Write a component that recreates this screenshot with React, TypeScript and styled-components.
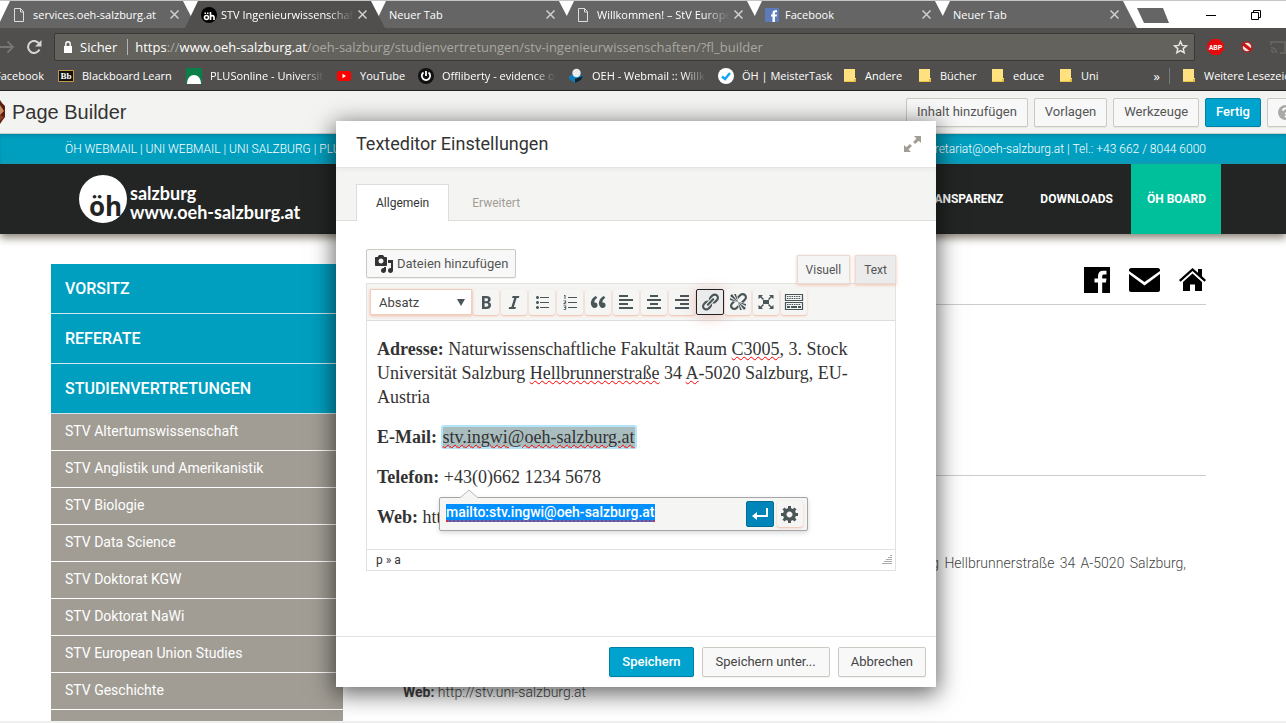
import React from "react";
import styled, { createGlobalStyle, css } from "styled-components";

const GlobalStyle = createGlobalStyle`
  *, *::before, *::after { box-sizing: border-box; }
  html, body, #root { height: 100%; }
  body { margin: 0; background: #fff; font-family: Roboto, "Liberation Sans", sans-serif; overflow: hidden; }
  button, input, select { font-family: inherit; margin: 0; }
  a { color: inherit; text-decoration: none; }
  svg { display: block; flex: none; }
`;

/* ---------- Browser frame ---------- */

const Window = styled.div`
  position: relative;
  display: flex;
  flex-direction: column;
  height: 100vh;
  overflow: hidden;
`;

const Chrome = styled.header`
  flex: none;
  color: #fff;
  font: 11px/16px "Segoe UI", "Open Sans", sans-serif;
`;

const TabStrip = styled.div`
  display: flex;
  height: 28px;
  padding-left: 9px;
  background: #fff;
  border-top: 1px solid #c4c6c4;
`;

const BrowserTab = styled.div<{ $active?: boolean }>`
  position: relative;
  z-index: ${(p) => (p.$active ? 1 : 0)};
  display: flex;
  align-items: center;
  gap: 4px;
  width: 200px;
  flex: none;
  margin-left: -12px;
  padding: 0 18px 0 16px;
  background: ${(p) => (p.$active ? "#504f4d" : "#656565")};
  clip-path: polygon(0 100%, 13px 0, 186px 0, 200px 100%);
`;

const TabTitle = styled.span<{ $fade?: boolean }>`
  flex: 1;
  min-width: 0;
  overflow: hidden;
  white-space: nowrap;
  ${(p) => p.$fade && css`mask-image: linear-gradient(90deg, #000 80%, transparent);`}
`;

const IconSlot = styled.span`
  display: flex;
  width: 16px;
  flex: none;
`;

const BareButton = styled.button`
  display: flex;
  align-items: center;
  justify-content: center;
  flex: none;
  padding: 0;
  border: 0;
  background: none;
  color: inherit;
`;

const NewTab = styled.button`
  width: 32px;
  height: 15px;
  margin: 7px 0 0;
  padding: 0;
  border: 0;
  background: #656565;
  clip-path: polygon(0 0, 26px 0, 32px 100%, 7px 100%);
`;

const WindowButtons = styled.div`
  display: flex;
  gap: 35px;
  margin-left: auto;
  padding-right: 25px;
  color: #000;
`;

const AddressRow = styled.div`
  display: flex;
  align-items: center;
  height: 33px;
  padding-top: 5px;
  gap: 12px;
  background: #504f4d;
`;

const AddressBox = styled.div`
  display: flex;
  align-items: center;
  flex: 1;
  height: 28px;
  padding: 0 6px 0 9px;
  background: #63625c;
  border: 1px solid #3a3937;
  border-radius: 2px;
  font-size: 13px;
`;

const Secure = styled.span`
  padding: 0 10px 0 8px;
  margin-right: 7px;
  border-right: 1px solid #b5b4b0;
`;

const Url = styled.span`
  flex: 1;
  color: #fff;
  white-space: nowrap;
`;

const Dim = styled.span`
  color: #a9a8a3;
`;

const Extensions = styled.div`
  display: flex;
  align-items: center;
  gap: 16px;
  width: 79px;
  flex: none;
`;

const Bookmarks = styled.nav`
  display: flex;
  align-items: center;
  height: 30px;
  margin-left: -5px;
  background: #504f4d;
  border-bottom: 1px solid #262524;
`;

const Bookmark = styled.a<{ $width: number; $fade?: boolean }>`
  display: flex;
  align-items: center;
  gap: 8px;
  flex: none;
  width: ${(p) => p.$width}px;
  white-space: nowrap;
  span:last-child {
    flex: 1;
    overflow: hidden;
    margin-right: ${(p) => (p.$fade ? 12 : 0)}px;
    ${(p) => p.$fade && css`mask-image: linear-gradient(90deg, #000 80%, transparent);`}
  }
`;

const Overflow = styled(BareButton)`
  margin-left: auto;
  height: 16px;
  padding-right: 9px;
  margin-right: 12px;
  border-right: 1px solid #777;
  font-size: 13px;
`;

/* ---------- Builder bar and site header ---------- */

const BuilderBar = styled.div`
  display: flex;
  align-items: center;
  flex: none;
  height: 43px;
  background: #f3f3f2;
  border-bottom: 1px solid #ccc;
`;

const BuilderTitle = styled.h1`
  margin: 0 auto 0 7px;
  color: #333;
  font: 20px/24px "Liberation Sans", Arial, sans-serif;
`;

const ButtonRow = styled.div<{ $gap: number; $bleed?: boolean }>`
  display: flex;
  gap: ${(p) => p.$gap}px;
  margin-right: ${(p) => (p.$bleed ? -18 : 0)}px;
`;

const Button = styled.button<{ $primary?: boolean; $pad?: number }>`
  display: flex;
  align-items: center;
  gap: 3px;
  height: 29px;
  padding: 0 ${(p) => p.$pad ?? 10}px;
  border: 1px solid ${(p) => (p.$primary ? "#0081a3" : "#ccc9c2")};
  border-radius: 2px;
  background: ${(p) => (p.$primary ? "#00a3cd" : "#f8f8f8")};
  color: ${(p) => (p.$primary ? "#fff" : "#555")};
  font-size: 13px;
  font-weight: ${(p) => (p.$primary ? 500 : 400)};
  line-height: 16px;
  white-space: nowrap;
  box-shadow: 0 1px 0 rgba(0, 0, 0, 0.05);
`;

const TopBar = styled.div`
  display: flex;
  justify-content: space-between;
  align-items: center;
  flex: none;
  height: 30px;
  padding: 0 80px 0 65px;
  background: #009fbf;
  box-shadow: inset 0 2px 3px rgba(0, 0, 0, 0.12);
  color: #fff;
  font-size: 12px;
  font-weight: 300;
  line-height: 16px;
`;

const SiteHeader = styled.div`
  position: relative;
  display: flex;
  justify-content: space-between;
  flex: none;
  height: 70px;
  padding: 0 65px 0 79px;
  background: #232524;
  box-shadow: 0 4px 8px #8d867a;
`;

const Logo = styled.a`
  display: flex;
  align-items: center;
  gap: 3px;
  color: #fff;
  font: 700 18px/19px Lato, "Open Sans", sans-serif;
`;

const LogoMark = styled.span`
  display: flex;
  justify-content: center;
  align-items: flex-end;
  width: 48px;
  height: 48px;
  border-radius: 50%;
  background: #fff;
  color: #232524;
  padding: 0 0 3px 5px;
  font: 700 26px/28px "Open Sans", sans-serif;
`;

const LogoText = styled.span`
  padding-top: 7px;
`;

const MainNav = styled.nav`
  display: flex;
  color: #fff;
  font-size: 12px;
  font-weight: 700;
`;

const NavLink = styled.a<{ $highlight?: boolean }>`
  display: flex;
  align-items: center;
  padding: ${(p) => (p.$highlight ? "0 15px 0 16px" : "0 18px 0 19px")};
  background: ${(p) => (p.$highlight ? "#00c09c" : "transparent")};
`;

/* ---------- Page content ---------- */

const Page = styled.main`
  display: flex;
  flex: 1;
  min-height: 0;
  gap: 40px;
  padding: 30px 80px 0 51px;
  overflow: hidden;
  border-bottom: 2px solid #f0f0f0;
`;

const Sidebar = styled.nav`
  width: 292px;
  flex: none;
  color: #fff;
`;

const SideHeading = styled.a`
  display: flex;
  align-items: center;
  height: 50px;
  padding-left: 14px;
  background: #009fbf;
  border-bottom: 1px solid #cfe6ec;
  font-size: 16px;
  font-weight: 500;
`;

const SideItem = styled.a`
  display: block;
  height: 37px;
  padding: 8px 14px;
  background: #a19d95;
  border-bottom: 1px solid #fff;
  font-size: 14px;
  line-height: 18px;
`;

const Article = styled.section`
  flex: 1;
  min-width: 0;
`;

const SocialRow = styled.div`
  display: flex;
  justify-content: flex-end;
  align-items: center;
  gap: 19px;
  height: 41px;
  padding-bottom: 9px;
  border-bottom: 1px solid #ccc;
`;

const PageTitle = styled.div`
  height: 171px;
  border-bottom: 1px solid #ccc;
`;

const Contact = styled.div`
  padding: 75px 20px 0;
  color: #444;
  font-size: 14px;
  font-weight: 300;
  line-height: 24px;
  text-align: justify;
  p { margin: 0 0 11px; }
  b { font-weight: 700; }
`;

/* ---------- Settings dialog ---------- */

const Overlay = styled.div`
  position: absolute;
  z-index: 5;
  inset: 121px 14px 0 0;
  display: flex;
  justify-content: center;
  align-items: flex-start;
  pointer-events: none;
`;

const Dialog = styled.section`
  width: 600px;
  background: #fff;
  box-shadow: 0 5px 22px 2px rgba(0, 0, 0, 0.6);
  pointer-events: auto;
`;

const DialogHeader = styled.div`
  display: flex;
  justify-content: space-between;
  align-items: center;
  height: 47px;
  padding: 0 15px 0 20px;
  border-bottom: 1px solid #e3e3e1;
  h2 { margin: 0; color: #333; font-size: 18px; line-height: 24px; font-weight: 400; }
`;

const DialogTabs = styled.div`
  display: flex;
  align-items: flex-end;
  gap: 3px;
  height: 53px;
  padding-left: 20px;
  background: #f4f4f2;
  border-bottom: 1px solid #ddd;
  box-shadow: inset 0 3px 3px rgba(0, 0, 0, 0.03);
`;

const DialogTab = styled.button<{ $active?: boolean }>`
  height: 37px;
  margin-bottom: -1px;
  padding: 0 19px;
  border: 1px solid ${(p) => (p.$active ? "#ddd" : "transparent")};
  border-bottom: 0;
  background: ${(p) => (p.$active ? "#fff" : "transparent")};
  color: ${(p) => (p.$active ? "#333" : "#a19d95")};
  font-size: 12px;
`;

const DialogBody = styled.div`
  padding: 28px 40px 65px 30px;
`;

const EditorTools = styled.div`
  display: flex;
  justify-content: space-between;
  align-items: flex-start;
  height: 34px;
`;

const ModeTabs = styled.div`
  position: relative;
  z-index: 1;
  display: flex;
  gap: 5px;
  padding-top: 6px;
`;

const glow = css`
  box-shadow: 0 1px 3px rgba(240, 150, 110, 0.6);
`;

const ModeTab = styled.button<{ $dark?: boolean }>`
  height: 29px;
  padding: 0 8px;
  border: 1px solid #e5ddd8;
  background: ${(p) => (p.$dark ? "#ebebeb" : "#f5f5f5")};
  color: #555;
  font-size: 12px;
  ${glow}
`;

const Editor = styled.div`
  border: 1px solid #e2e2df;
`;

const EditorToolbar = styled.div`
  display: flex;
  align-items: center;
  gap: 2px;
  height: 37px;
  padding-left: 3px;
  background: #f5f5f4;
  border-bottom: 1px solid #ddd;
`;

const SelectWrap = styled.label`
  position: relative;
  display: flex;
  width: 102px;
  margin-right: -1px;
  svg { position: absolute; right: 7px; top: 10px; pointer-events: none; }
`;

const FormatSelect = styled.select`
  appearance: none;
  width: 100%;
  height: 26px;
  padding: 0 8px;
  border: 1px solid #f0cfc0;
  border-radius: 0;
  background: #fff;
  color: #444;
  font-size: 13px;
  ${glow}
`;

const ToolButton = styled.button<{ $pressed?: boolean; $primary?: boolean }>`
  display: flex;
  align-items: center;
  justify-content: center;
  width: 26px;
  height: 26px;
  padding: 0;
  flex: none;
  border: 0;
  border-radius: 3px;
  background: #f5f5f4;
  color: #4a5558;
  box-shadow: 0 1px 2px rgba(240, 150, 110, 0.6);
  ${(p) =>
    p.$pressed &&
    css`
      width: 28px;
      margin: 0 -1px;
      border: 1px solid #222;
      border-radius: 2px;
      background: #ebebeb;
      box-shadow: 0 2px 14px rgba(200, 80, 60, 0.3);
    `}
  ${(p) =>
    p.$primary &&
    css`
      width: 28px;
      border: 1px solid #006f95;
      border-radius: 2px;
      background: #0085ba;
      color: #fff;
      box-shadow: none;
    `}
`;

const EditorContent = styled.div`
  position: relative;
  height: 228px;
  padding: 16px 10px 0;
  color: #333;
  font: 18px/24px Georgia, "Liberation Serif", serif;
  white-space: nowrap;
  p { margin: 0 0 16px; }
`;

const Misspelt = styled.span`
  text-decoration: underline wavy #f00 1px;
`;

const SelectedLink = styled.a`
  margin-left: 1px;
  background: #a9bdbf;
  border-radius: 1px;
  box-shadow: 0 0 0 2px #b3e4fa;
  text-decoration: underline wavy #f00 1px;
`;

const LinkPopover = styled.form`
  position: absolute;
  left: 72px;
  top: 176px;
  display: flex;
  align-items: center;
  gap: 3px;
  width: 369px;
  height: 34px;
  padding: 0 4px 0 6px;
  background: #f5f5f4;
  border: 1px solid #a3a5a6;
  border-radius: 2px;
  box-shadow: 0 2px 5px rgba(0, 0, 0, 0.15);
  > svg { position: absolute; left: 20px; top: -9px; }
`;

const UrlInput = styled.input`
  width: 209px;
  height: 18px;
  margin: 0 auto 2px 0;
  padding: 0;
  border: 0;
  border-bottom: 2px dotted #d22a4a;
  background: #0090ff;
  color: #fff;
  font-family: Roboto, sans-serif;
  font-size: 14px;
  font-weight: 500;
  outline: 0;
`;

const StatusBar = styled.div`
  display: flex;
  justify-content: space-between;
  align-items: center;
  height: 21px;
  padding: 0 2px 0 9px;
  border-top: 1px solid #e2e2df;
  color: #333;
  font-size: 12px;
`;

const DialogFooter = styled.div`
  display: flex;
  justify-content: flex-end;
  padding: 10px;
  border-top: 1px solid #e3e3e1;
  button { height: 30px; color: #444; }
  button:first-child { color: #fff; }
`;

/* ---------- Icons ---------- */

const DocIcon = () => (
  <svg width="12" height="14" viewBox="0 0 12 14" fill="none" stroke="#ddd">
    <path d="M1.5.5h6l3 3v10h-9zM7.5.5v3.5h3" />
  </svg>
);

const OehIcon = () => (
  <svg width="16" height="16" viewBox="0 0 16 16">
    <circle cx="8" cy="8" r="8" fill="#000" />
    <g fill="none" stroke="#fff" strokeWidth="1.6">
      <circle cx="5.5" cy="10.5" r="2" />
      <path d="M9.5 5v8M9.5 10.5c0-2.500 3.500-2.500 3.500 0V13" />
    </g>
    <path d="M3.500 5.500h1.500V7H3.500zM6 5.500h1.500V7H6z" fill="#fff" />
  </svg>
);

const FbIcon = () => (
  <svg width="14" height="14" viewBox="0 0 14 14">
    <path d="M0 0h14v14H0z" fill="#5b7cb8" />
    <path d="M7.5 14V8.5H6v-2h1.5V5c0-1.9 1-2.8 2.7-2.8H12v2h-1.200c-.7 0-.9.3-.9.9v1.4H12l-.3 2H9.900V14z" fill="#fff" />
  </svg>
);

const CloseIcon = () => (
  <svg width="9" height="9" viewBox="0 0 9 9" stroke="#cfcfcf" strokeWidth="1.5">
    <path d="M.5.5l8 8M8.500.5l-8 8" />
  </svg>
);

const FolderIcon = () => (
  <svg width="14" height="14" viewBox="0 0 14 14">
    <path d="M1 0h11v9h1v4H1z" fill="#ffe27f" />
    <path d="M1 13h12v-3h-2v2.300H1z" fill="#e9b935" />
  </svg>
);

const dash = {
  bold: "M6 4v13h4.54c1.37 0 2.46-.33 3.26-1 .8-.66 1.2-1.58 1.2-2.77 0-.84-.17-1.51-.51-2.01s-.9-.85-1.67-1.03v-.09c.57-.1 1.02-.4 1.36-.9s.51-1.13.51-1.91c0-1.14-.39-1.98-1.17-2.5C12.75 4.26 11.5 4 9.78 4H6zm2.57 5.15V6.26h1.36c.73 0 1.27.11 1.61.32.34.22.51.58.51 1.07 0 .54-.16.92-.47 1.15s-.82.35-1.51.35h-1.5zm0 2.19h1.6c1.44 0 2.16.53 2.16 1.61 0 .6-.17 1.05-.51 1.34s-.86.43-1.57.43H8.57v-3.38z",
  italic: "M14.78 6h-2.13l-2.8 9h2.12l-.62 2H4.6l.62-2h2.14l2.8-9H8.03l.62-2h6.75z",
  ul: "M5.5 7C4.67 7 4 6.33 4 5.5 4 4.68 4.67 4 5.5 4 6.32 4 7 4.68 7 5.5 7 6.33 6.32 7 5.5 7zM8 5h9v1H8V5zm-2.5 7c-.83 0-1.5-.67-1.5-1.5C4 9.68 4.67 9 5.5 9c.82 0 1.5.68 1.5 1.5 0 .83-.68 1.5-1.5 1.5zM8 10h9v1H8v-1zm-2.5 7c-.83 0-1.5-.67-1.5-1.5 0-.82.67-1.5 1.5-1.5.82 0 1.5.68 1.5 1.5 0 .83-.68 1.5-1.5 1.5zM8 15h9v1H8v-1z",
  ol: "M8 5h9v1H8zM8 10h9v1H8zM8 15h9v1H8zM4 3h1.500v4h-1V4H4zM3.500 8.500h2.700v2L4.700 11.500h1.500v.8H3.500v-1.100l1.700-1.200v-.7H3.500zM3.500 13.500h2.700v4.300H3.500V17h1.700v-1H4v-.7h1.200v-1H3.500z",
  quote: "M9.49 13.22c0-.74-.2-1.38-.61-1.9-.62-.78-1.83-.88-2.53-.72-.29-1.65 1.11-3.75 2.92-4.65L7.88 4c-2.73 1.3-5.42 4.28-4.96 8.05C3.21 14.43 4.59 16 6.54 16c.85 0 1.56-.25 2.12-.75s.83-1.18.83-2.03zm8.05 0c0-.74-.2-1.38-.61-1.9-.63-.78-1.83-.88-2.53-.72-.29-1.65 1.11-3.75 2.92-4.65L15.93 4c-2.73 1.3-5.41 4.28-4.95 8.05.29 2.38 1.66 3.95 3.61 3.95.85 0 1.56-.25 2.12-.75s.83-1.18.83-2.03z",
  left: "M12 5V3H3v2h9zm5 4V7H3v2h14zm-5 4v-2H3v2h9zm5 4v-2H3v2h14z",
  center: "M14 5V3H6v2h8zm3 4V7H3v2h14zm-3 4v-2H6v2h8zm3 4v-2H3v2h14z",
  right: "M17 5V3H8v2h9zm0 4V7H3v2h14zm0 4v-2H8v2h9zm0 4v-2H3v2h14z",
  link: "M17.74 2.76c1.68 1.69 1.68 4.41 0 6.1l-1.53 1.52c-1.12 1.12-2.7 1.47-4.14 1.09l2.62-2.61.76-.77.76-.76c.84-.84.84-2.2 0-3.04-.84-.85-2.2-.85-3.04 0l-.77.76-3.38 3.38c-.37-1.44-.02-3.02 1.1-4.14l1.52-1.53c1.69-1.68 4.42-1.68 6.1 0zM8.59 13.43l5.34-5.34c.42-.42.42-1.1 0-1.52-.44-.43-1.13-.39-1.53 0l-5.33 5.34c-.42.42-.42 1.1 0 1.52.44.43 1.13.39 1.52 0zm-.76 2.29l4.14-4.15c.38 1.44.03 3.02-1.09 4.14l-1.52 1.53c-1.69 1.68-4.41 1.68-6.1 0-1.68-1.68-1.68-4.42 0-6.1l1.53-1.52c1.12-1.12 2.7-1.47 4.14-1.1l-4.14 4.15c-.85.84-.85 2.2 0 3.05.84.84 2.2.84 3.04 0z",
  unlink: "M17.74 2.26c1.68 1.69 1.68 4.41 0 6.1l-1.53 1.52c-.32.33-.69.58-1.08.77L13 10l1.69-1.64.76-.77.76-.76c.84-.84.84-2.2 0-3.04-.84-.85-2.2-.85-3.04 0l-.77.76-.76.76L10 7l-.65-2.14c.19-.38.44-.75.77-1.07l1.52-1.53c1.69-1.68 4.42-1.68 6.1 0zM2 4l8 6-6-8zm4-2l4 8-2-8H6zM2 6l8 4-8-2V6zm7.36 7.69L10 13l.74 2.35-1.38 1.39c-1.69 1.68-4.41 1.68-6.1 0-1.68-1.68-1.68-4.42 0-6.1l1.39-1.38L7 10l-.69.64-1.52 1.53c-.85.84-.85 2.2 0 3.04.84.85 2.2.85 3.04 0zM18 16l-8-6 6 8zm-4 2l-4-8 2 8h2zm4-4l-8-4 8 2v2z",
  full: "M7 8h6v4H7zM2.500 3h4.500L5.500 4.500 8 7 7 8 4.500 5.500 2.500 7zM17.500 3v4l-2-1.500L13 8l-1-1 2.500-2.500L13 3zM2.500 17v-4l2 1.500L7 12l1 1-2.500 2.500L7 17zM17.500 17H13l1.500-1.500L12 13l1-1 2.500 2.500 2-1.500z",
  gear: "M18 12h-2.18c-.17.7-.44 1.35-.81 1.93l1.54 1.54-2.1 2.1-1.54-1.54c-.58.36-1.23.63-1.91.79V19H8v-2.18c-.68-.16-1.33-.43-1.91-.79l-1.54 1.54-2.12-2.12 1.54-1.54c-.36-.58-.63-1.23-.79-1.91H1V9.03h2.17c.16-.7.44-1.35.8-1.94L2.43 5.55l2.1-2.1 1.54 1.54c.58-.37 1.24-.64 1.93-.81V2h3v2.18c.68.16 1.33.43 1.91.79l1.54-1.54 2.12 2.12-1.54 1.54c.36.59.64 1.24.8 1.94H18V12zm-8.5 1.5c1.66 0 3-1.34 3-3s-1.34-3-3-3-3 1.34-3 3 1.34 3 3 3z",
  enter: "M16 4h2v9H7v3l-5-4 5-4v3h9V4z",
  media: "M13 11V4c0-.55-.45-1-1-1h-1.67L9 1H5L3.67 3H2c-.55 0-1 .45-1 1v7c0 .55.45 1 1 1h10c.55 0 1-.45 1-1zM7 4.5c1.38 0 2.5 1.12 2.5 2.5S8.38 9.5 7 9.5 4.5 8.38 4.5 7 5.62 4.5 7 4.5zM14 6h5v10.5c0 1.38-1.12 2.5-2.5 2.5S14 17.88 14 16.5s1.12-2.5 2.5-2.5c.17 0 .34.02.5.05V9h-3V6zm-4 8.05V13h2v3.5c0 1.38-1.12 2.5-2.5 2.5S7 17.88 7 16.5 8.12 14 9.5 14c.17 0 .34.02.5.05z",
};

const Dash = ({ d, color = "currentColor" }: { d: string; color?: string }) => (
  <svg width="20" height="20" viewBox="0 0 20 20" fill={color}>
    <path d={d} />
  </svg>
);

const KeyboardIcon = () => (
  <svg width="20" height="20" viewBox="0 0 20 20" fill="none" stroke="currentColor">
    <path d="M1.500 2.500h17v6h-17zM1.500 10.500h17v7h-17z" strokeWidth="1.2" />
    <path d="M3 4.500h14M3 6.500h14M3 12.500h14" strokeWidth="1.2" strokeDasharray="1.5 .8" />
    <path d="M3 15h3M7 15h6M14 15h3" strokeWidth="2" />
  </svg>
);

/* ---------- Data ---------- */

const tabs = [
  { title: "services.oeh-salzburg.at", icon: <DocIcon /> },
  { title: "STV Ingenieurwissenschaften", icon: <OehIcon />, active: true, fade: true },
  { title: "Neuer Tab" },
  { title: "Willkommen! – StV European", icon: <DocIcon />, fade: true },
  { title: "Facebook", icon: <FbIcon /> },
  { title: "Neuer Tab" },
];

const bookmarks = [
  {
    label: "Blackboard Learn",
    width: 128,
    icon: (
      <svg width="16" height="12" viewBox="0 0 16 12">
        <path d="M.5.5h15v11H.5z" fill="#111" stroke="#c79a4b" />
        <text x="8" y="9" fill="#fff" fontFamily="Liberation Serif" fontWeight="700" fontSize="9" textAnchor="middle">Bb</text>
      </svg>
    ),
  },
  {
    label: "PLUSonline - Universität",
    width: 150,
    fade: true,
    icon: (
      <svg width="16" height="16" viewBox="0 0 16 16">
        <path d="M0 0h16v16H0z" fill="#0a7f47" />
        <path d="M1 16c0-12 14-12 14 0z" fill="#fff" />
      </svg>
    ),
  },
  {
    label: "YouTube",
    width: 82,
    icon: (
      <svg width="16" height="12" viewBox="0 0 16 12">
        <rect x="1" y="1" width="14" height="10" rx="2" fill="#f00" />
        <path d="M6.500 3.800v4.400L10 6z" fill="#fff" />
      </svg>
    ),
  },
  {
    label: "Offliberty - evidence of",
    width: 150,
    fade: true,
    icon: (
      <svg width="16" height="16" viewBox="0 0 16 16" fill="none" stroke="#fff">
        <circle cx="8" cy="8" r="8" fill="#111" stroke="none" />
        <path d="M5.500 4.500a4.200 4.200 0 1 0 5 0M8 3v5" strokeWidth="1.8" />
      </svg>
    ),
  },
  {
    label: "OEH - Webmail :: Willkommen",
    width: 150,
    fade: true,
    icon: (
      <svg width="16" height="16" viewBox="0 0 16 16">
        <path d="M1 8l7-3 7 3-2 4-6 3-6-4z" fill="#0e7bb5" />
        <path d="M7 15l6-3 2-4-8 3z" fill="#12222c" />
        <circle cx="8.500" cy="5" r="4.200" fill="#e9ecee" />
      </svg>
    ),
  },
  {
    label: "ÖH | MeisterTask",
    width: 125,
    icon: (
      <svg width="16" height="16" viewBox="0 0 16 16">
        <circle cx="8" cy="8" r="8" fill="#fff" />
        <path d="M4 8.500l3 2.500 5-6" fill="none" stroke="#14a5f4" strokeWidth="2.4" />
      </svg>
    ),
  },
  { label: "Andere", width: 75, icon: <FolderIcon /> },
  { label: "Bücher", width: 73, icon: <FolderIcon /> },
  { label: "educe", width: 68, icon: <FolderIcon /> },
  { label: "Uni", width: 60, icon: <FolderIcon /> },
];

const sections = ["VORSITZ", "REFERATE", "STUDIENVERTRETUNGEN"];

const groups = [
  "STV Altertumswissenschaft",
  "STV Anglistik und Amerikanistik",
  "STV Biologie",
  "STV Data Science",
  "STV Doktorat KGW",
  "STV Doktorat NaWi",
  "STV European Union Studies",
  "STV Geschichte",
  "",
];

const tools: { label: string; icon: React.ReactNode; pressed?: boolean }[] = [
  { label: "Fett", icon: <Dash d={dash.bold} /> },
  { label: "Kursiv", icon: <Dash d={dash.italic} /> },
  { label: "Aufzählung", icon: <Dash d={dash.ul} /> },
  { label: "Nummerierte Liste", icon: <Dash d={dash.ol} /> },
  { label: "Zitat", icon: <Dash d={dash.quote} /> },
  { label: "Linksbündig", icon: <Dash d={dash.left} /> },
  { label: "Zentriert", icon: <Dash d={dash.center} /> },
  { label: "Rechtsbündig", icon: <Dash d={dash.right} /> },
  { label: "Link einfügen", icon: <Dash d={dash.link} />, pressed: true },
  { label: "Link entfernen", icon: <Dash d={dash.unlink} /> },
  { label: "Vollbild", icon: <Dash d={dash.full} /> },
  { label: "Werkzeugleiste umschalten", icon: <KeyboardIcon /> },
];

/* ---------- Parts ---------- */

const BrowserChrome = () => (
  <Chrome>
    <TabStrip>
      {tabs.map((t, i) => (
        <BrowserTab key={i} $active={t.active}>
          {t.icon && <IconSlot>{t.icon}</IconSlot>}
          <TabTitle $fade={t.fade}>{t.title}</TabTitle>
          <BareButton aria-label="Tab schließen"><CloseIcon /></BareButton>
        </BrowserTab>
      ))}
      <NewTab aria-label="Neuer Tab" />
      <WindowButtons>
        <BareButton aria-label="Minimieren">
          <svg width="10" height="10" viewBox="0 0 10 10"><path d="M0 5h10v1H0z" /></svg>
        </BareButton>
        <BareButton aria-label="Verkleinern">
          <svg width="10" height="10" viewBox="0 0 10 10" fill="none" stroke="#000">
            <path d="M.5 2.500h7v7h-7zM2.500 2V.5h7v7H8" />
          </svg>
        </BareButton>
      </WindowButtons>
    </TabStrip>
    <AddressRow>
      <BareButton aria-label="Vorwärts">
        <svg width="15" height="14" viewBox="0 0 15 14" fill="none" stroke="#777672" strokeWidth="1.8">
          <path d="M0 7h13M7.500 1.500L13 7l-5.500 5.500" />
        </svg>
      </BareButton>
      <BareButton aria-label="Neu laden">
        <svg width="15" height="14" viewBox="0 0 15 14">
          <path d="M12.500 9.500A6 6 0 1 1 12 3.500" fill="none" stroke="#d6d5d2" strokeWidth="2" />
          <path d="M14.500 0v6.500H8z" fill="#d6d5d2" />
        </svg>
      </BareButton>
      <AddressBox>
        <svg width="8" height="12" viewBox="0 0 8 12">
          <path d="M0 5h8v7H0z" fill="#fff" />
          <path d="M1.800 5V3a2.200 2.200 0 0 1 4.400 0v2" fill="none" stroke="#fff" strokeWidth="1.4" />
        </svg>
        <Secure>Sicher</Secure>
        <Url>
          https<Dim>://</Dim>www.oeh-salzburg.at
          <Dim>/oeh-salzburg/studienvertretungen/stv-ingenieurwissenschaften/?fl_builder</Dim>
        </Url>
        <BareButton aria-label="Lesezeichen setzen">
          <svg width="15" height="14" viewBox="0 0 15 14" fill="none" stroke="#e6e5e2" strokeWidth="1.5">
            <path d="M7.500 1.500l1.700 3.900 4.200.4-3.200 2.800 1 4.100-3.700-2.200-3.700 2.200 1-4.100L1.600 5.800l4.200-.4z" />
          </svg>
        </BareButton>
      </AddressBox>
      <Extensions>
        <svg width="17" height="16" viewBox="0 0 17 16">
          <path d="M5 0h7l5 5v6l-5 5H5l-5-5V5z" fill="#e20a0a" />
          <text x="8.500" y="11" fill="#fff" fontFamily="Roboto" fontWeight="700" fontSize="7" textAnchor="middle">ABP</text>
        </svg>
        <svg width="14" height="14" viewBox="0 0 14 14">
          <circle cx="7" cy="7" r="5" fill="#e8e4e0" stroke="#a82424" strokeWidth="1.5" />
          <path d="M2.500 3.500l9 7" stroke="#c81414" strokeWidth="3" />
        </svg>
        <svg width="16" height="13" viewBox="0 0 16 13" fill="none" stroke="#6a6966" strokeWidth="1.5">
          <path d="M1 4V1h14v11h-5M1 6.500A6 6 0 0 1 6.500 12M1 9.500A3 3 0 0 1 3.500 12" />
        </svg>
      </Extensions>
    </AddressRow>
    <Bookmarks>
      <Bookmark href="#" $width={63}><span>Facebook</span></Bookmark>
      {bookmarks.map((b) => (
        <Bookmark key={b.label} href="#" $width={b.width} $fade={b.fade}>
          {b.icon}
          <span>{b.label}</span>
        </Bookmark>
      ))}
      <Overflow aria-label="Weitere">»</Overflow>
      <Bookmark href="#" $width={104}><FolderIcon /><span>Weitere Lesezeichen</span></Bookmark>
    </Bookmarks>
  </Chrome>
);

const SettingsDialog = () => (
  <Overlay>
    <Dialog role="dialog" aria-labelledby="dialog-title">
      <DialogHeader>
        <h2 id="dialog-title">Texteditor Einstellungen</h2>
        <BareButton aria-label="Maximieren">
          <svg width="17" height="16" viewBox="0 0 17 16" fill="#a19d95">
            <path d="M10 0h7v7l-2.300-2.300-3.600 3.300-2-2 3.400-3.500zM7 16H0V9l2.300 2.300L5.900 8l2 2-3.400 3.500z" />
          </svg>
        </BareButton>
      </DialogHeader>
      <DialogTabs>
        <DialogTab $active>Allgemein</DialogTab>
        <DialogTab>Erweitert</DialogTab>
      </DialogTabs>
      <DialogBody>
        <EditorTools>
          <Button $pad={7}><Dash d={dash.media} color="#333" />Dateien hinzufügen</Button>
          <ModeTabs>
            <ModeTab>Visuell</ModeTab>
            <ModeTab $dark>Text</ModeTab>
          </ModeTabs>
        </EditorTools>
        <Editor>
          <EditorToolbar>
            <SelectWrap>
              <FormatSelect aria-label="Format" defaultValue="Absatz">
                <option>Absatz</option>
              </FormatSelect>
              <svg width="8" height="7" viewBox="0 0 8 7" fill="#4a5558"><path d="M0 0h8L4 7z" /></svg>
            </SelectWrap>
            {tools.map((t) => (
              <ToolButton key={t.label} aria-label={t.label} $pressed={t.pressed}>{t.icon}</ToolButton>
            ))}
          </EditorToolbar>
          <EditorContent>
            <p>
              <b>Adresse:</b> Naturwissenschaftliche Fakultät Raum <Misspelt>C3005</Misspelt>, 3. Stock
              <br />
              Universität Salzburg <Misspelt>Hellbrunnerstraße</Misspelt> 34 <Misspelt>A</Misspelt>-5020 Salzburg, EU-
              <br />
              Austria
            </p>
            <p><b>E-Mail:</b> <SelectedLink href="#">stv.ingwi@oeh-salzburg.at</SelectedLink></p>
            <p><b>Telefon:</b> +43(0)662 1234 5678</p>
            <p><b>Web:</b> http://stv.uni-salzburg.at</p>
            <LinkPopover onSubmit={(e) => e.preventDefault()}>
              <svg width="18" height="9" viewBox="0 0 18 9">
                <path d="M0 9l9-8 9 8z" fill="#f5f5f4" />
                <path d="M.5 8.500L9 1l8.500 7.500" fill="none" stroke="#b5b7b8" />
              </svg>
              <UrlInput aria-label="URL" defaultValue="mailto:stv.ingwi@oeh-salzburg.at" spellCheck={false} />
              <ToolButton $primary aria-label="Anwenden"><Dash d={dash.enter} /></ToolButton>
              <ToolButton type="button" aria-label="Link-Optionen"><Dash d={dash.gear} /></ToolButton>
            </LinkPopover>
          </EditorContent>
          <StatusBar>
            <span>p » a</span>
            <svg width="11" height="10" viewBox="0 0 11 10" fill="#aaa">
              <path d="M8 0h2v1H8zM6 2h4v1H6zM4 4h6v1H4zM2 6h8v1H2zM0 8h10v1H0z" />
            </svg>
          </StatusBar>
        </Editor>
      </DialogBody>
      <DialogFooter>
        <ButtonRow $gap={8}>
          <Button $primary $pad={12}>Speichern</Button>
          <Button $pad={13}>Speichern unter...</Button>
          <Button $pad={12}>Abbrechen</Button>
        </ButtonRow>
      </DialogFooter>
    </Dialog>
  </Overlay>
);

export default function App() {
  return (
    <Window>
      <GlobalStyle />
      <BrowserChrome />
      <BuilderBar>
        <svg width="5" height="24" viewBox="0 0 5 24">
          <path d="M0 0l2 3 3 3v11l-3 4-2 3z" fill="#5a1d12" />
          <path d="M0 5l4 6-4 4z" fill="#c98a5e" />
          <path d="M0 15l4 2-4 4z" fill="#8c3d24" />
        </svg>
        <BuilderTitle>Page Builder</BuilderTitle>
        <ButtonRow $gap={6} $bleed>
          <Button>Inhalt hinzufügen</Button>
          <Button>Vorlagen</Button>
          <Button>Werkzeuge</Button>
          <Button $primary>Fertig</Button>
          <Button aria-label="Hilfe">
            <svg width="15" height="15" viewBox="0 0 15 15">
              <circle cx="7.500" cy="7.500" r="7.500" fill="#a9a9a7" />
              <path d="M5 5.800c0-3.300 5-3 5 0 0 1.700-2.300 1.700-2.300 3.400M7.700 10.500v1.800" fill="none" stroke="#fff" strokeWidth="1.8" />
            </svg>
          </Button>
        </ButtonRow>
      </BuilderBar>
      <TopBar>
        <span>ÖH WEBMAIL | UNI WEBMAIL | UNI SALZBURG | PLUSONLINE</span>
        <span>sekretariat@oeh-salzburg.at | Tel.: +43 662 / 8044 6000</span>
      </TopBar>
      <SiteHeader>
        <Logo href="#">
          <LogoMark>öh</LogoMark>
          <LogoText>salzburg<br />www.oeh-salzburg.at</LogoText>
        </Logo>
        <MainNav>
          <NavLink href="#">TRANSPARENZ</NavLink>
          <NavLink href="#">DOWNLOADS</NavLink>
          <NavLink href="#" $highlight>ÖH BOARD</NavLink>
        </MainNav>
      </SiteHeader>
      <Page>
        <Sidebar>
          {sections.map((s) => <SideHeading key={s} href="#">{s}</SideHeading>)}
          {groups.map((g) => <SideItem key={g} href="#">{g}</SideItem>)}
        </Sidebar>
        <Article>
          <SocialRow>
            <svg width="26" height="26" viewBox="0 0 26 26">
              <path d="M0 0h26v26H0z" />
              <path d="M14 26V15.500h-3.500v-4H14V9c0-3.400 2-5.200 5-5.200h3.500v3.800h-2.200c-1.500 0-2.100.6-2.100 1.900v2h4.300l-.6 4h-3.700V26z" fill="#fff" />
            </svg>
            <svg width="31" height="24" viewBox="0 0 31 24">
              <path d="M2 0h27c1 0 2 1 2 2v1L15.500 14 0 3V2c0-1 1-2 2-2z" />
              <path d="M0 6l15.500 11.500L31 6v16c0 1-1 2-2 2H2c-1 0-2-1-2-2z" />
            </svg>
            <svg width="27" height="23" viewBox="0 0 27 23">
              <path d="M13.500 0L19 4.800V1h4v7.300l4 3.700-1.500 1.700-12-10.700-12 10.700L0 12z" />
              <path d="M13.500 5.500L23 14v9h-7v-6.500h-5V23H4v-9z" />
            </svg>
          </SocialRow>
          <PageTitle />
          <Contact>
            <p>
              <b>Adresse:</b> Naturwissenschaftliche Fakultät Raum C3005, 3. Stock Universität Salzburg
              Hellbrunnerstraße 34 A-5020 Salzburg, EU-Austria
            </p>
            <p><b>E-Mail:</b> stv.ingwi@oeh-salzburg.at</p>
            <p><b>Telefon:</b> +43(0)662 1234 5678</p>
            <p><b>Web:</b> http://stv.uni-salzburg.at</p>
          </Contact>
        </Article>
      </Page>
      <SettingsDialog />
    </Window>
  );
}
